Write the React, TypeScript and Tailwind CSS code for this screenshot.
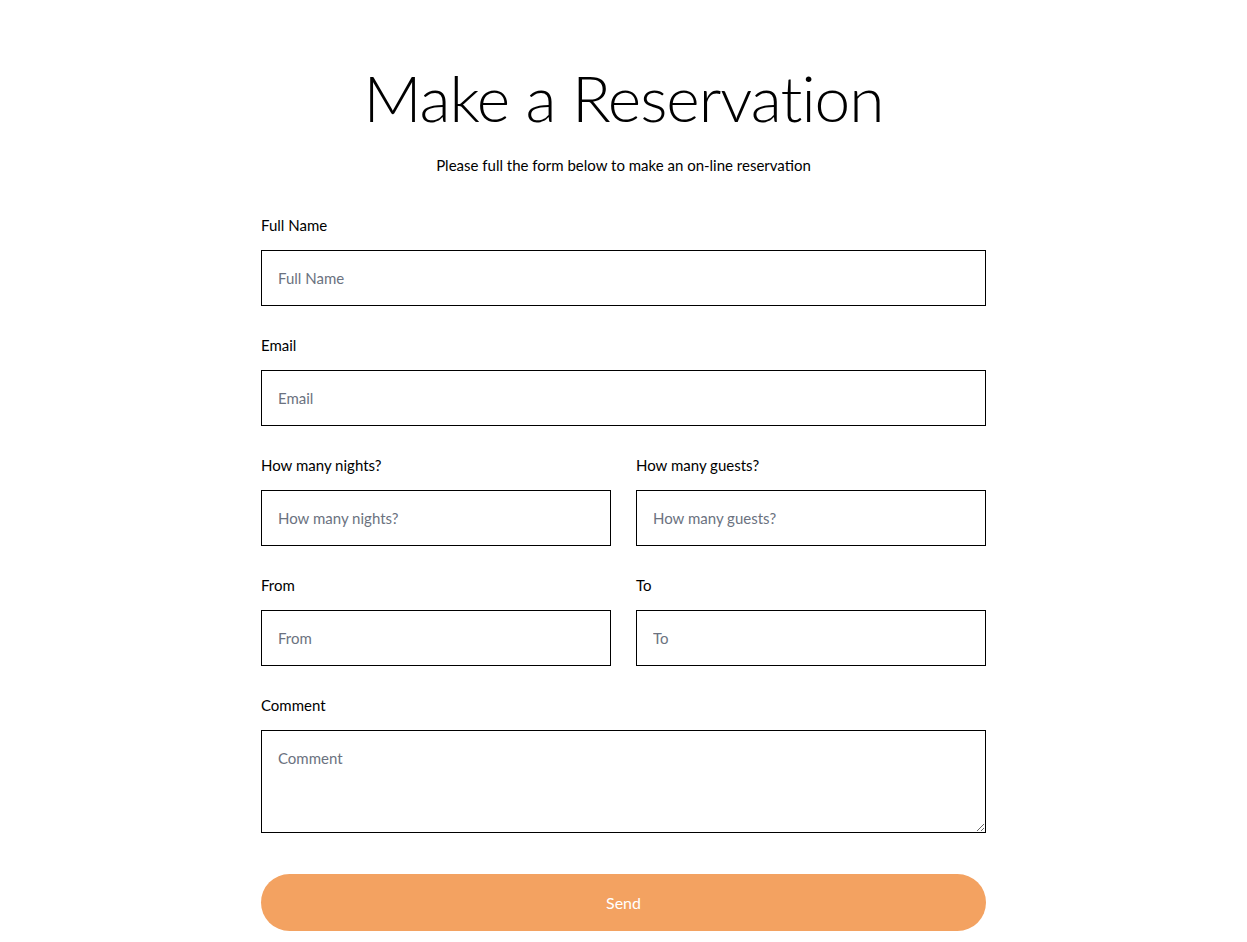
import React from "react";

const font = { fontFamily: "Lato, 'Noto Sans', sans-serif" };

function Field({ label, ph }: { label: string; ph: string }) {
  return (
    <div className="flex flex-col">
      <label className="text-[15px] leading-[24px] text-black">{label}</label>
      <input
        placeholder={ph}
        className="mt-[13px] h-[56px] w-full border border-black bg-white px-4 text-[15px] text-black outline-none placeholder:text-[#6b7280]"
      />
    </div>
  );
}

export default function App() {
  return (
    <div className="min-h-screen bg-white" style={font}>
      <div className="mx-auto flex w-[725px] flex-col pt-[58px] pb-[10px]">
        <h1 className="text-center text-[64px] font-light leading-[80px] tracking-[-1px] text-black">Make a Reservation</h1>
        <p className="mt-[15px] text-center text-[15px] leading-[24px] text-black">
          Please full the form below to make an on-line reservation
        </p>
        <div className="mt-[36px] flex flex-col gap-[27px]">
          <Field label="Full Name" ph="Full Name" />
          <Field label="Email" ph="Email" />
          <div className="grid grid-cols-[350px_350px] justify-between">
            <Field label="How many nights?" ph="How many nights?" />
            <Field label="How many guests?" ph="How many guests?" />
          </div>
          <div className="grid grid-cols-[350px_350px] justify-between">
            <Field label="From" ph="From" />
            <Field label="To" ph="To" />
          </div>
          <div className="flex flex-col">
            <label className="text-[15px] leading-[24px] text-black">Comment</label>
            <textarea
              placeholder="Comment"
              className="mt-[13px] h-[103px] w-full border border-black bg-white px-4 py-[16px] text-[15px] leading-[22px] text-black outline-none placeholder:text-[#6b7280]"
            />
          </div>
        </div>
        <button className="mt-[41px] h-[57px] w-full rounded-full bg-[#f3a261] text-[16px] text-white">
          Send
        </button>
      </div>
    </div>
  );
}
